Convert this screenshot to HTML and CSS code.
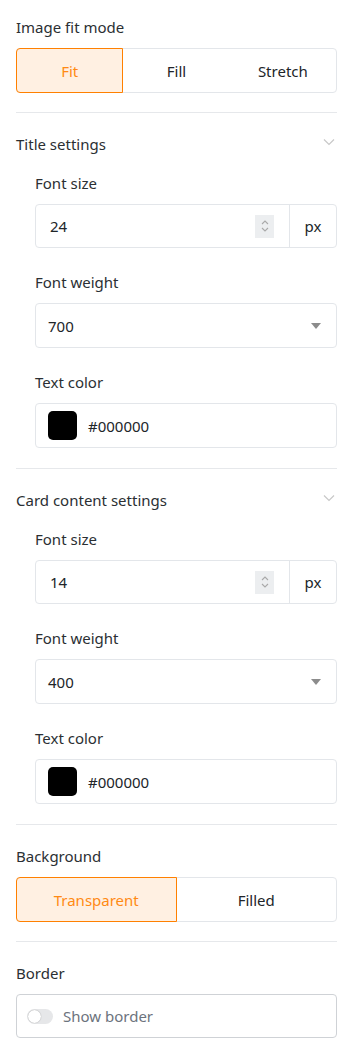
FILE: index.html
```html
<!DOCTYPE html>
<html>
<head>
<meta charset="utf-8">
<link rel="stylesheet" href="styles.css">
</head>
<body>
<div class="panel">
  <div class="field">
    <div class="label">Image fit mode</div>
    <div class="seg seg3">
      <div class="seg-item active">Fit</div>
      <div class="seg-item">Fill</div>
      <div class="seg-item">Stretch</div>
    </div>
  </div>

  <hr class="divider">

  <div class="section">
    <div class="section-head">
      <span>Title settings</span>
      <svg class="chev" width="12" height="8" viewBox="0 0 12 8"><path d="M1 1.5 L6 6.5 L11 1.5" fill="none" stroke="#c8c8c8" stroke-width="1.2"/></svg>
    </div>
    <div class="section-body">
      <div class="field">
        <div class="label">Font size</div>
        <div class="input-group">
          <div class="num">
            <span class="val">24</span>
            <span class="spin">
              <svg width="10" height="16" viewBox="0 0 10 16"><path d="M2 6 L5 3 L8 6 M2 10 L5 13 L8 10" fill="none" stroke="#a9a9a9" stroke-width="1.1"/></svg>
            </span>
          </div>
          <div class="addon">px</div>
        </div>
      </div>
      <div class="field">
        <div class="label">Font weight</div>
        <div class="select">
          <span class="val">700</span>
          <svg width="10" height="6" viewBox="0 0 10 6"><path d="M0 0 H10 L5 6 Z" fill="#8c8c8c"/></svg>
        </div>
      </div>
      <div class="field">
        <div class="label">Text color</div>
        <div class="color">
          <span class="swatch"></span>
          <span class="val">#000000</span>
        </div>
      </div>
    </div>
  </div>

  <hr class="divider">

  <div class="section">
    <div class="section-head">
      <span>Card content settings</span>
      <svg class="chev" width="12" height="8" viewBox="0 0 12 8"><path d="M1 1.5 L6 6.5 L11 1.5" fill="none" stroke="#c8c8c8" stroke-width="1.2"/></svg>
    </div>
    <div class="section-body">
      <div class="field">
        <div class="label">Font size</div>
        <div class="input-group">
          <div class="num">
            <span class="val">14</span>
            <span class="spin">
              <svg width="10" height="16" viewBox="0 0 10 16"><path d="M2 6 L5 3 L8 6 M2 10 L5 13 L8 10" fill="none" stroke="#a9a9a9" stroke-width="1.1"/></svg>
            </span>
          </div>
          <div class="addon">px</div>
        </div>
      </div>
      <div class="field">
        <div class="label">Font weight</div>
        <div class="select">
          <span class="val">400</span>
          <svg width="10" height="6" viewBox="0 0 10 6"><path d="M0 0 H10 L5 6 Z" fill="#8c8c8c"/></svg>
        </div>
      </div>
      <div class="field">
        <div class="label">Text color</div>
        <div class="color">
          <span class="swatch"></span>
          <span class="val">#000000</span>
        </div>
      </div>
    </div>
  </div>

  <hr class="divider">

  <div class="field">
    <div class="label">Background</div>
    <div class="seg seg2">
      <div class="seg-item active">Transparent</div>
      <div class="seg-item">Filled</div>
    </div>
  </div>

  <hr class="divider">

  <div class="field">
    <div class="label">Border</div>
    <div class="toggle-box">
      <span class="toggle"><span class="knob"></span></span>
      <span class="toggle-label">Show border</span>
    </div>
  </div>
</div>
</body>
</html>
```

FILE: styles.css
```css
* { box-sizing: border-box; }
html, body { margin: 0; padding: 0; background: #fff; }
body {
  font-family: "Noto Sans", "Open Sans", sans-serif;
  font-size: 15px;
  color: #212529;
}
.panel {
  padding: 16px 16px 0 16px;
  display: flex;
  flex-direction: column;
}
.field {
  display: flex;
  flex-direction: column;
  gap: 10px;
}
.label {
  line-height: 22px;
  height: 22px;
  color: #2b2f33;
}
.seg {
  display: grid;
  height: 45px;
  border: 1px solid #e3e6ea;
  border-radius: 4px;
}
.seg3 { grid-template-columns: 1fr 1fr 1fr; }
.seg2 { grid-template-columns: 1fr 1fr; }
.seg-item {
  display: flex;
  align-items: center;
  justify-content: center;
  color: #212529;
}
.seg-item.active {
  margin: -1px 0 -1px -1px;
  border: 1px solid #ff8000;
  background: #fff0e2;
  color: #ff8a14;
  border-radius: 4px 0 0 4px;
}
.divider {
  border: none;
  border-top: 1px solid #e6e8eb;
  margin: 19px 0 20px 0;
  height: 0;
}
.section {
  display: flex;
  flex-direction: column;
}
.section-head {
  display: flex;
  justify-content: space-between;
  align-items: center;
  height: 22px;
  line-height: 22px;
  color: #2b2f33;
}
.chev { margin-right: 2px; margin-top: -4px; }
.section-body {
  padding-left: 19px;
  padding-top: 17px;
  padding-bottom: 1px;
  display: flex;
  flex-direction: column;
  gap: 23px;
}
.input-group {
  display: flex;
  height: 44px;
  border: 1px solid #e3e6ea;
  border-radius: 4px;
}
.num {
  flex: 1;
  display: flex;
  align-items: center;
  justify-content: space-between;
  padding: 0 15px 0 14px;
}
.spin {
  width: 19px;
  height: 23px;
  background: #eceef0;
  display: flex;
  align-items: center;
  justify-content: center;
}
.addon {
  width: 47px;
  border-left: 1px solid #e3e6ea;
  display: flex;
  align-items: center;
  justify-content: center;
}
.select {
  height: 45px;
  border: 1px solid #e3e6ea;
  border-radius: 4px;
  display: flex;
  align-items: center;
  justify-content: space-between;
  padding: 0 15px 0 12px;
}
.color {
  height: 45px;
  border: 1px solid #e3e6ea;
  border-radius: 4px;
  display: flex;
  align-items: center;
  gap: 11px;
  padding: 0 12px;
}
.swatch {
  width: 29px;
  height: 29px;
  border-radius: 5px;
  background: #000;
}
.toggle-box {
  height: 44px;
  border: 1px solid #cfd2d6;
  border-radius: 4px;
  display: flex;
  align-items: center;
  gap: 10px;
  padding: 0 10px;
}
.toggle {
  width: 26px;
  height: 15px;
  border-radius: 8px;
  background: #e6e7e9;
  position: relative;
  display: inline-block;
}
.knob {
  position: absolute;
  left: 1px;
  top: 1px;
  width: 13px;
  height: 13px;
  border-radius: 50%;
  background: #fff;
  box-shadow: 0 0 1px rgba(0,0,0,0.4);
}
.toggle-label { color: #6c737d; }
```
